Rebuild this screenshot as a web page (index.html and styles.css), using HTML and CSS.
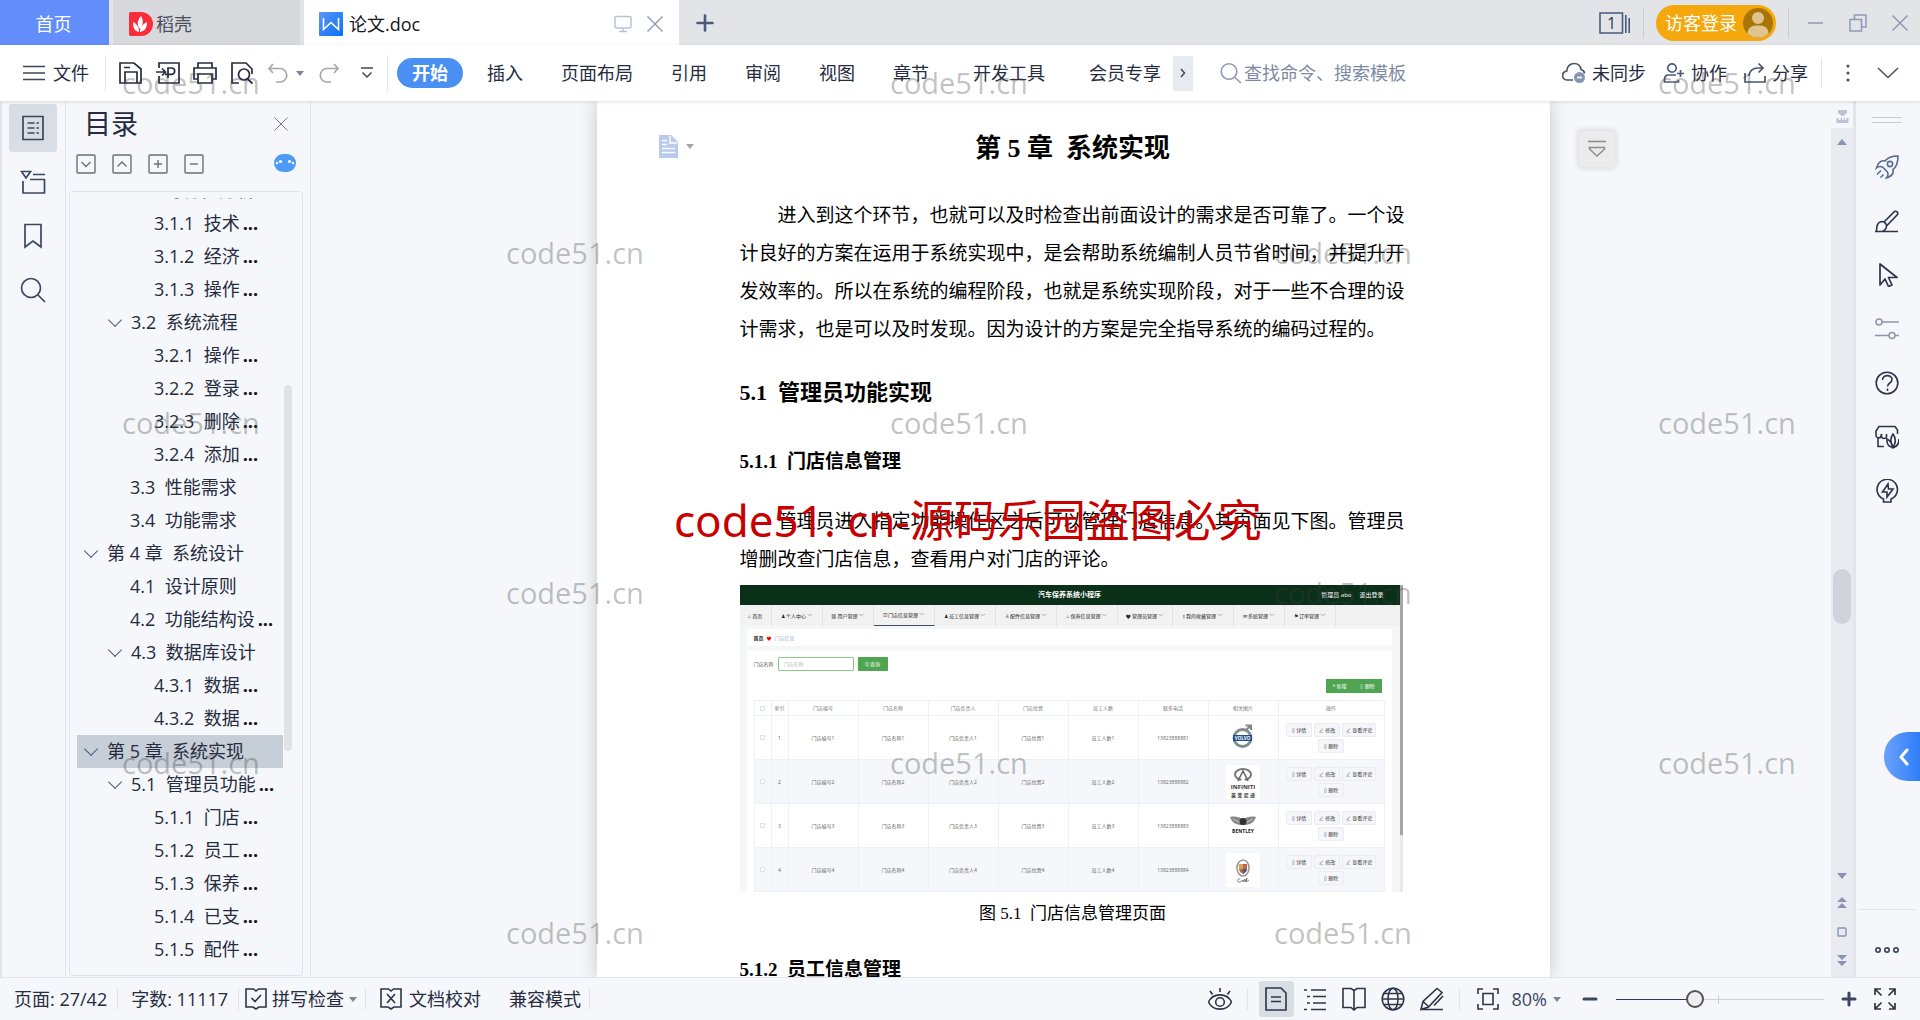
FILE: index.html
```html
<!DOCTYPE html>
<html lang="zh-CN">
<head>
<meta charset="utf-8">
<title>论文.doc</title>
<link rel="stylesheet" href="styles.css">
</head>
<body>
<header class="titlebar">
  <button class="tab tab-home">首页</button>
  <button class="tab tab-store">
    <svg width="24" height="24" viewBox="0 0 24 24"><path d="M0 2a2 2 0 0 1 2-2h10a12 12 0 0 1 0 24H2a2 2 0 0 1-2-2z" fill="#fb2b3a"/><path d="M12 4c3 5 2 9-1 13C7 12 9 8 12 4zM4 10c4 2 6 5 6 10-5-1-6-5-6-10zM18 10c0 6-2 9-7 10 0-5 3-8 7-10z" fill="#fff"/></svg>
    稻壳</button>
  <div class="tab tab-doc">
    <svg width="24" height="24" viewBox="0 0 24 24"><defs><linearGradient id="wps" x1="0" y1="0" x2="1" y2="1"><stop offset="0" stop-color="#5b95f7"/><stop offset="1" stop-color="#0b72f5"/></linearGradient></defs><rect width="24" height="24" rx="1" fill="url(#wps)"/><path d="M4.500 6v11.500l7.500-7 7.500 7V6" fill="none" stroke="#fff" stroke-width="1.600"/></svg>
    <span class="tab-name">论文.doc</span>
    <button class="plain" aria-label="显示方式"><svg width="18" height="18" viewBox="0 0 18 18" fill="none" stroke="#b9c2d6" stroke-width="1.500"><rect x="1" y="1.500" width="16" height="11.500" rx="1.500"/><path d="M9 13v3.500M5 16.500h8"/></svg></button>
    <button class="plain" aria-label="关闭标签"><svg width="18" height="18" viewBox="0 0 18 18" fill="none" stroke="#8d99b5" stroke-width="1.400"><path d="M1.500 1.500l15 15M16.500 1.500l-15 15"/></svg></button>
  </div>
  <button class="plain new-tab" aria-label="新建"><svg width="18" height="18" viewBox="0 0 18 18" stroke="#4b5a7c" stroke-width="2.600" stroke-linecap="round"><path d="M9 1.500v15M1.500 9h15"/></svg></button>
  <div class="window-tools">
    <button class="plain" aria-label="标签列表"><svg width="32" height="22" viewBox="0 0 32 22" fill="none" stroke="#4b5a7c" stroke-width="1.600"><path d="M1 1h22.500v20H1zM26.800 3v18M30.200 6v15"/><text x="12.500" y="17" text-anchor="middle" font-size="16" fill="#333a4c" stroke="none">1</text></svg></button>
    <span class="sep sep-title"></span>
    <button class="login">访客登录<svg width="30" height="30" viewBox="0 0 30 30"><circle cx="15" cy="15" r="15" fill="#a97504"/><circle cx="15" cy="10" r="6" fill="#dfc48f"/><path d="M4.500 25.500C5 19 9 17.500 15 17.500s10 1.500 10.500 8A15 15 0 0 1 4.500 25.500z" fill="#dfc48f"/></svg></button>
    <span class="sep sep-title"></span>
    <button class="plain win" aria-label="最小化"><svg width="18" height="18" viewBox="0 0 18 18" stroke="#8d99b5" stroke-width="1.500"><path d="M1 9h15"/></svg></button>
    <button class="plain win" aria-label="还原"><svg width="18" height="18" viewBox="0 0 18 18" fill="none" stroke="#8d99b5" stroke-width="1.500"><path d="M1 5.500h11.500v11.500H1zM5.500 5V1H17v12h-4"/></svg></button>
    <button class="plain win" aria-label="关闭"><svg width="18" height="18" viewBox="0 0 18 18" stroke="#8d99b5" stroke-width="1.500"><path d="M1.500 1.500l15 15M16.500 1.500l-15 15"/></svg></button>
  </div>
</header>

<nav class="toolbar">
  <button class="plain file"><svg width="22" height="16" viewBox="0 0 22 16" stroke="#3f4658" stroke-width="1.600"><path d="M0 1.500h22M0 8h22M0 14.500h22"/></svg>文件</button>
  <span class="sep"></span>
  <div class="quick">
    <button class="plain" aria-label="保存"><svg width="24" height="24" viewBox="0 0 24 24" fill="none" stroke="#262c3f" stroke-width="1.700"><path d="M1 2h14l7 6v14H1zM6 22V11h12v11M5 6.500h6"/></svg></button>
    <button class="plain" aria-label="输出为PDF"><svg width="24" height="24" viewBox="0 0 24 24" fill="none" stroke="#262c3f" stroke-width="1.700"><path d="M3 7V2h20v20H3v-7M0 11h9M6 7.500L9.500 11 6 14.500M12 17V7h3.500a3.200 3.200 0 0 1 0 6.400H9"/></svg></button>
    <button class="plain" aria-label="打印"><svg width="24" height="24" viewBox="0 0 24 24" fill="none" stroke="#262c3f" stroke-width="1.700"><path d="M5 7V2h14v5M5 18H1V7h22v11h-4M5 13h14v9H5z"/></svg></button>
    <button class="plain" aria-label="打印预览"><svg width="24" height="24" viewBox="0 0 24 24" fill="none" stroke="#262c3f" stroke-width="1.700"><path d="M9 22H2V2h14l6 6v5M17.500 18l5 4.500"/><circle cx="14" cy="13.500" r="5.500"/></svg></button>
    <button class="plain" aria-label="撤销"><svg width="22" height="22" viewBox="0 0 22 22" fill="none" stroke="#a3a7af" stroke-width="1.700"><path d="M6 2L2 6.500 6 11M2 6.500h11a6.500 6.500 0 0 1 0 13.500H9"/></svg></button>
    <i class="caret"></i>
    <button class="plain redo" aria-label="恢复"><svg width="22" height="22" viewBox="0 0 22 22" fill="none" stroke="#a3a7af" stroke-width="1.700"><path d="M16 2l4 4.500L16 11M20 6.500H9A6.500 6.500 0 0 0 9 20h4"/></svg></button>
    <button class="plain more" aria-label="更多"><svg width="12" height="12" viewBox="0 0 12 12" fill="none" stroke="#3f4658" stroke-width="1.500"><path d="M0 1h12M1.500 5.500L6 10l4.500-4.500"/></svg></button>
  </div>
  <span class="sep"></span>
  <div class="menus">
    <button class="pill">开始</button>
    <button class="plain">插入</button>
    <button class="plain">页面布局</button>
    <button class="plain">引用</button>
    <button class="plain">审阅</button>
    <button class="plain">视图</button>
    <button class="plain">章节</button>
    <button class="plain wide">开发工具</button>
    <button class="plain wide">会员专享</button>
  </div>
  <button class="scroll-menus" aria-label="更多菜单"><svg width="6" height="10" viewBox="0 0 6 10" fill="none" stroke="#3f4658" stroke-width="1.500"><path d="M1 1l3.500 4L1 9"/></svg></button>
  <label class="search"><svg width="22" height="22" viewBox="0 0 22 22" fill="none" stroke="#8d99b5" stroke-width="1.600"><circle cx="9" cy="9.500" r="7.800"/><path d="M15 15.500l6 5.500"/></svg><input type="text" placeholder="查找命令、搜索模板" aria-label="查找命令、搜索模板"></label>
  <div class="share">
    <button class="plain"><svg width="24" height="22" viewBox="0 0 24 22" fill="none" stroke="#4b5468" stroke-width="1.700"><path d="M11 18H5.500a4.500 4.500 0 0 1-.8-9C5 4 8.500 1.500 12 1.500c4 0 6.500 2.500 7 6 2 .5 3.500 2 3.500 4"/><circle cx="17.500" cy="15.500" r="5.500" fill="#8795b3" stroke="none"/><path d="M15 15.500h5" stroke="#fff"/></svg>未同步</button>
    <button class="plain"><svg width="22" height="22" viewBox="0 0 22 22" fill="none" stroke="#4b5a7c" stroke-width="1.700"><circle cx="9" cy="6" r="4.200"/><path d="M13 13H5.500C3 13 1.500 15 1.500 17.500V20h14v-2M17.500 8v7M14 11.500h7"/></svg>协作</button>
    <button class="plain"><svg width="22" height="22" viewBox="0 0 22 22" fill="none" stroke="#4b5468" stroke-width="1.700"><path d="M1 11v9h20v-6M5 14c0-5 4-8 9-8h5M14.500 1.500L19 6l-4.500 4.500"/></svg>分享</button>
    <span class="sep"></span>
    <button class="plain" aria-label="菜单"><svg width="4" height="20" viewBox="0 0 4 20" fill="#4b5468"><circle cx="2" cy="3" r="1.600"/><circle cx="2" cy="10" r="1.600"/><circle cx="2" cy="17" r="1.600"/></svg></button>
    <button class="plain fold" aria-label="收起"><svg width="22" height="12" viewBox="0 0 22 12" fill="none" stroke="#4b5468" stroke-width="1.600"><path d="M1 1l10 9.500L21 1"/></svg></button>
  </div>
</nav>

<main class="work">
  <aside class="rail">
    <button class="rail-btn on" aria-label="目录"><svg width="24" height="26" viewBox="0 0 24 26" fill="none" stroke="#3b4763" stroke-width="1.700"><path d="M2 1.500h20v23H2zM6.500 8h7M6.500 13h7M6.500 18h7M15.500 8H18M15.500 13H18M15.500 18H18"/></svg></button>
    <button class="rail-btn" aria-label="章节"><svg width="26" height="24" viewBox="0 0 26 24" fill="none" stroke="#3b4763" stroke-width="1.700"><path d="M1.500 1.500h9L6 8zM13 4.500h12M10 9.500h14.500V23H3V11"/></svg></button>
    <button class="rail-btn" aria-label="书签"><svg width="24" height="26" viewBox="0 0 24 26" fill="none" stroke="#3b4763" stroke-width="1.700"><path d="M4 1.500h16v22.500l-8-6-8 6z"/></svg></button>
    <button class="rail-btn" aria-label="查找"><svg width="26" height="26" viewBox="0 0 26 26" fill="none" stroke="#3b4763" stroke-width="1.700"><circle cx="11" cy="11" r="9.500"/><path d="M18 18l7 7"/></svg></button>
  </aside>

  <aside class="toc">
    <div class="toc-head"><h2>目录</h2><button class="plain" aria-label="关闭目录"><svg width="14" height="14" viewBox="0 0 14 14" stroke="#6d7890"><path d="M.5.5l13 13M13.500.5l-13 13"/></svg></button></div>
    <div class="toc-tools">
      <button class="plain" aria-label="展开"><svg width="20" height="20" viewBox="0 0 20 20" fill="none" stroke="#6d6f75" stroke-width="1.400"><rect x="1" y="1" width="18" height="18" rx="1"/><path d="M5.500 8l4.500 4.500L14.500 8"/></svg></button>
      <button class="plain" aria-label="收起"><svg width="20" height="20" viewBox="0 0 20 20" fill="none" stroke="#6d6f75" stroke-width="1.400"><rect x="1" y="1" width="18" height="18" rx="1"/><path d="M5.500 12.500L10 8l4.500 4.500"/></svg></button>
      <button class="plain" aria-label="增加级别"><svg width="20" height="20" viewBox="0 0 20 20" fill="none" stroke="#6d6f75" stroke-width="1.400"><rect x="1" y="1" width="18" height="18" rx="1"/><path d="M6 10h8M10 6v8"/></svg></button>
      <button class="plain" aria-label="减少级别"><svg width="20" height="20" viewBox="0 0 20 20" fill="none" stroke="#6d6f75" stroke-width="1.400"><rect x="1" y="1" width="18" height="18" rx="1"/><path d="M6 10h8"/></svg></button>
      <button class="plain robot" aria-label="智能识别目录"><svg width="22" height="18" viewBox="0 0 22 18"><rect width="22" height="18" rx="9" fill="#4e9bf5"/><g fill="#fff"><circle cx="3" cy="9" r="1.200"/><circle cx="6.500" cy="7.500" r="1.600"/><circle cx="15.500" cy="7.500" r="1.600"/><circle cx="19" cy="9" r="1.200"/></g></svg></button>
    </div>
    <div class="tree-box">
      <ul class="tree">
        <li class="l2">3.1&nbsp; 可行性分析</li>
        <li class="l3">3.1.1&nbsp; 技术<b>...</b></li>
        <li class="l3">3.1.2&nbsp; 经济<b>...</b></li>
        <li class="l3">3.1.3&nbsp; 操作<b>...</b></li>
        <li class="l2 open">3.2&nbsp; 系统流程</li>
        <li class="l3">3.2.1&nbsp; 操作<b>...</b></li>
        <li class="l3">3.2.2&nbsp; 登录<b>...</b></li>
        <li class="l3">3.2.3&nbsp; 删除<b>...</b></li>
        <li class="l3">3.2.4&nbsp; 添加<b>...</b></li>
        <li class="l2">3.3&nbsp; 性能需求</li>
        <li class="l2">3.4&nbsp; 功能需求</li>
        <li class="l1 open">第 4 章&nbsp; 系统设计</li>
        <li class="l2">4.1&nbsp; 设计原则</li>
        <li class="l2">4.2&nbsp; 功能结构设<b>...</b></li>
        <li class="l2 open">4.3&nbsp; 数据库设计</li>
        <li class="l3">4.3.1&nbsp; 数据<b>...</b></li>
        <li class="l3">4.3.2&nbsp; 数据<b>...</b></li>
        <li class="l1 open current">第 5 章&nbsp; 系统实现</li>
        <li class="l2 open">5.1&nbsp; 管理员功能<b>...</b></li>
        <li class="l3">5.1.1&nbsp; 门店<b>...</b></li>
        <li class="l3">5.1.2&nbsp; 员工<b>...</b></li>
        <li class="l3">5.1.3&nbsp; 保养<b>...</b></li>
        <li class="l3">5.1.4&nbsp; 已支<b>...</b></li>
        <li class="l3">5.1.5&nbsp; 配件<b>...</b></li>
      </ul>
      <div class="tree-thumb"></div>
    </div>
  </aside>

  <section class="desk">
    <div class="gutter"></div>
    <article class="paper">
      <div class="paste"><svg width="19" height="23" viewBox="0 0 19 23"><path d="M0 0h12l7 7v16H0z" fill="#b9cbea"/><path d="M11 1v7h7M3 5.500h5M3 9.500h5M3 13.500h13M3 17.500h13" fill="none" stroke="#fff" stroke-width="1.400"/></svg><i class="caret grey"></i></div>
      <div class="text">
        <h1>第 5 章&nbsp; 系统实现</h1>
        <p class="p1">进入到这个环节，也就可以及时检查出前面设计的需求是否可靠了。一个设计良好的方案在运用于系统实现中，是会帮助系统编制人员节省时间，并提升开发效率的。所以在系统的编程阶段，也就是系统实现阶段，对于一些不合理的设计需求，也是可以及时发现。因为设计的方案是完全指导系统的编码过程的。</p>
        <h2>5.1&nbsp; 管理员功能实现</h2>
        <h3 class="first">5.1.1&nbsp; 门店信息管理</h3>
        <p class="p2">管理员进入指定功能操作区之后可以管理门店信息。其页面见下图。管理员增删改查门店信息，查看用户对门店的评论。</p>
        <figure>
          <div class="shot">
            <div class="shot-main">
              <div class="shot-head"><span></span><b>汽车保养系统小程序</b><span class="who"><span>管理员 abo</span><span>退出登录</span></span></div>
              <div class="shot-nav">
                <span class="n0">⌂ 首页</span><span class="n1">♟ 个人中心 ﹀</span><span class="n1">▦ 用户管理 ﹀</span><span class="n2 sel">☑ 门店信息管理 ﹀</span><span class="n2">♟ 员工信息管理 ﹀</span><span class="n2">♙ 配件信息管理 ﹀</span><span class="n2">⌂ 保养信息管理 ﹀</span><span class="n3">♥ 管理员管理 ﹀</span><span class="n2">⫾ 我的收藏管理 ﹀</span><span class="n1">✉ 系统管理 ﹀</span><span class="n1">⚑ 订单管理 ﹀</span>
              </div>
              <div class="crumb"><b>首页</b><i>♥</i><span>门店信息</span></div>
              <div class="panel">
                <div class="query"><label for="shop">门店名称</label><input id="shop" type="text" placeholder="门店名称"><button>Q 查询</button></div>
                <div class="ops"><button>+ 新增</button><button>▯ 删除</button></div>
                <table>
                  <colgroup><col class="c1"><col class="c1"><col class="c2"><col class="c2"><col class="c2"><col class="c2"><col class="c2"><col class="c2"><col class="c2"><col class="c3"></colgroup>
                  <thead><tr><th><input type="checkbox" aria-label="全选"></th><th>索引</th><th>门店编号</th><th>门店名称</th><th>门店负责人</th><th>门店位置</th><th>员工人数</th><th>联系电话</th><th>相关图片</th><th>操作</th></tr></thead>
                  <tbody>
                    <tr><td><input type="checkbox" aria-label="选择1"></td><td>1</td><td>门店编号1</td><td>门店名称1</td><td>门店负责人1</td><td>门店位置1</td><td>员工人数1</td><td>13823888881</td>
                      <td><svg width="34" height="34" viewBox="0 0 34 34"><rect width="34" height="34" fill="#fff"/><circle cx="16.500" cy="17" r="8.500" fill="none" stroke="#7d8b91" stroke-width="2.800"/><path d="M20 9l5-4.500M19.500 4.500H25V9" fill="none" stroke="#7d8b91" stroke-width="2.200"/><rect x="7" y="14" width="19" height="6" fill="#1d4f8f"/><text x="16.500" y="18.700" font-size="4.500" font-weight="700" fill="#fff" text-anchor="middle">VOLVO</text></svg></td>
                      <td class="acts"><button>▯ 详情</button><button>∠ 修改</button><button>∠ 查看评论</button><button>▯ 删除</button></td></tr>
                    <tr><td><input type="checkbox" aria-label="选择2"></td><td>2</td><td>门店编号2</td><td>门店名称2</td><td>门店负责人2</td><td>门店位置2</td><td>员工人数2</td><td>13823888882</td>
                      <td><svg width="34" height="34" viewBox="0 0 34 34"><rect width="34" height="34" fill="#fff"/><ellipse cx="17" cy="9.500" rx="8" ry="5.500" fill="none" stroke="#777" stroke-width="2"/><path d="M12 16l5-10 5 10" fill="none" stroke="#666" stroke-width="1.600"/><path d="M15 16l2-7 2 7z" fill="#fff"/><text x="17" y="24" font-size="6" font-weight="700" fill="#333" text-anchor="middle">INFINITI</text><text x="17" y="32" font-size="5" font-weight="700" fill="#333" text-anchor="middle">英 菲 尼 迪</text></svg></td>
                      <td class="acts"><button>▯ 详情</button><button>∠ 修改</button><button>∠ 查看评论</button><button>▯ 删除</button></td></tr>
                    <tr><td><input type="checkbox" aria-label="选择3"></td><td>3</td><td>门店编号3</td><td>门店名称3</td><td>门店负责人3</td><td>门店位置3</td><td>员工人数3</td><td>13823888883</td>
                      <td><svg width="34" height="34" viewBox="0 0 34 34"><rect width="34" height="34" fill="#fff"/><path d="M4 8c5-1 9 0 13 2 4-2 8-3 13-2-2 6-6 8-13 8S6 14 4 8z" fill="#888"/><path d="M7 10l8 4M27 10l-8 4" stroke="#ddd" stroke-width=".7"/><circle cx="17" cy="12.500" r="3.500" fill="#333"/><text x="17" y="24" font-size="5" font-weight="700" fill="#222" text-anchor="middle">BENTLEY</text></svg></td>
                      <td class="acts"><button>▯ 详情</button><button>∠ 修改</button><button>∠ 查看评论</button><button>▯ 删除</button></td></tr>
                    <tr><td><input type="checkbox" aria-label="选择4"></td><td>4</td><td>门店编号4</td><td>门店名称4</td><td>门店负责人4</td><td>门店位置4</td><td>员工人数4</td><td>13823888884</td>
                      <td><svg width="34" height="34" viewBox="0 0 34 34"><rect width="34" height="34" fill="#fff"/><ellipse cx="17" cy="15" rx="6" ry="8" fill="none" stroke="#999" stroke-width="1.600"/><path d="M13 11h8v5c0 2-2 4-4 5-2-1-4-3-4-5z" fill="#b9664d"/><path d="M13 11h4v5h-4z" fill="#d8a34a"/><path d="M17 16h4c0 2-2 4-4 5z" fill="#4b5a86"/><path d="M14 26c-3-1-4 4 0 3l3-2v2l2-3v3l2-4-1 4 3-2" fill="none" stroke="#555" stroke-width=".7"/></svg></td>
                      <td class="acts"><button>▯ 详情</button><button>∠ 修改</button><button>∠ 查看评论</button><button>▯ 删除</button></td></tr>
                  </tbody>
                </table>
              </div>
            </div>
            <div class="shot-bar"><div></div></div>
          </div>
          <figcaption>图 5.1&nbsp; 门店信息管理页面</figcaption>
        </figure>
        <h3 class="next">5.1.2&nbsp; 员工信息管理</h3>
      </div>
    </article>
    <div class="gutter"><button class="float-btn" aria-label="折叠"><svg width="18" height="18" viewBox="0 0 18 18" fill="none" stroke="#8b8b8b" stroke-width="1.500"><path d="M0 1.500h18M1.500 7.500h15v1.500L9 16 1.500 9z"/></svg></button></div>
  </section>

  <div class="vbar">
    <svg class="ruler" width="13" height="13" viewBox="0 0 13 13" fill="#b9c2d8"><path d="M2 0h9v3L6.500 6.500 2 3zM.5 8h2v2h2V8h1.500v2h1.500V8H9v2h1.500V8h2v5H.5z"/></svg>
    <div class="track">
      <button class="plain" aria-label="向上滚动"><svg width="10" height="6" viewBox="0 0 10 6" fill="#8795b3"><path d="M5 0l5 6H0z"/></svg></button>
      <div class="thumb"></div>
      <button class="plain" aria-label="向下滚动"><svg width="10" height="6" viewBox="0 0 10 6" fill="#8795b3"><path d="M0 0h10L5 6z"/></svg></button>
      <button class="plain" aria-label="上一页"><svg width="10" height="12" viewBox="0 0 10 12" fill="#8795b3"><path d="M5 0l5 5H0zM5 6l5 5H0z"/></svg></button>
      <button class="plain" aria-label="选择浏览对象"><svg width="10" height="10" viewBox="0 0 10 10" fill="none" stroke="#8795b3" stroke-width="1.400"><rect x="1" y="1" width="8" height="8" rx="1"/></svg></button>
      <button class="plain" aria-label="下一页"><svg width="10" height="12" viewBox="0 0 10 12" fill="#8795b3"><path d="M0 0h10L5 5zM0 6h10l-5 5z"/></svg></button>
    </div>
  </div>

  <aside class="tools">
    <div class="grip"></div>
    <button class="plain" aria-label="火箭"><svg width="24" height="24" viewBox="0 0 24 24" fill="none" stroke="#5a6a94" stroke-width="1.600"><path d="M23 1c-6 0-10 1-13 5-4-1-7 2-8.500 7C4 11 6 11 8 12.500l4 4c1.500 2 1.500 4-.5 6.500C16 21.500 19 19 18 14.500c4-3 5-7.500 5-13.500zM2 19.500l4-4M5.500 22.500l3-3"/><circle cx="15" cy="9" r="2.600"/></svg></button>
    <button class="plain" aria-label="样式"><svg width="24" height="24" viewBox="0 0 24 24" fill="none" stroke="#2c3448" stroke-width="1.600"><path d="M9 13L19.500 2.500c2-1 4 1 3 3L12 16.500M0 22.500h23M1.500 22c0-6 1-9 5-9.500 4 0 6.500 4 4 7.500-1 1.500-2 2-3 2.500"/></svg></button>
    <button class="plain" aria-label="选择"><svg width="24" height="24" viewBox="0 0 24 24" fill="none" stroke="#2c3448" stroke-width="1.700" stroke-linejoin="round"><path d="M5 1v21l5-6 3.500 7.500 3.500-1.500-3.500-7.500H22z"/></svg></button>
    <button class="plain" aria-label="设置"><svg width="24" height="24" viewBox="0 0 24 24" fill="none" stroke="#8d97ab" stroke-width="1.500"><circle cx="4" cy="5" r="3"/><path d="M7 5h17M0 18.500h14M20 18.500h4"/><circle cx="17" cy="18.500" r="3"/></svg></button>
    <button class="plain" aria-label="帮助"><svg width="24" height="24" viewBox="0 0 24 24" fill="none" stroke="#2c3448" stroke-width="1.600"><circle cx="12" cy="12" r="10.800"/><path d="M7.500 9c0-6 9.500-5.500 9.500-.5 0 3.500-4.500 3.500-4.500 7M12.500 17.500v2.500"/></svg></button>
    <button class="plain" aria-label="素材"><svg width="24" height="24" viewBox="0 0 24 24" fill="none" stroke="#2c3448" stroke-width="1.600"><path d="M22.500 9V5L20 1.500H4L1 6v5c1 2 3 2.500 5 1 0-2 .5-3 .5-3v3c1 2 4 2 5 0V9M3 13v8.500h6M18 9c-3 4-3 8 0 13.500 3-5 3-9.500 0-13.500zM12 14c-.5 4.500 1 7.500 6 8.500-1-4.500-3-7-6-8.500zM24 14c0 4.500-1.500 7.500-6 8.500 1-2 2-4 2.500-6"/></svg></button>
    <button class="plain" aria-label="技巧"><svg width="24" height="24" viewBox="0 0 24 24" fill="none" stroke="#2c3448" stroke-width="1.600"><path d="M8.500 23v-3A10.200 10.200 0 1 1 16 20v3zM13 5l-5.500 8H12v5l6-8h-4.500z"/></svg></button>
    <div class="fill"></div>
    <button class="slide" aria-label="展开侧栏"><svg width="10" height="18" viewBox="0 0 10 18" fill="none" stroke="#fff" stroke-width="3" stroke-linecap="round" stroke-linejoin="round"><path d="M8 2L2 9l6 7"/></svg></button>
    <div class="tools-end"><button class="plain" aria-label="更多"><svg width="24" height="8" viewBox="0 0 24 8" fill="none" stroke="#3b4763" stroke-width="1.700"><circle cx="3" cy="4" r="2.200"/><circle cx="12" cy="4" r="2.200"/><circle cx="21" cy="4" r="2.200"/></svg></button></div>
  </aside>
</main>

<footer class="status">
  <span class="s-item">页面: 27/42</span><span class="sep"></span>
  <span class="s-item">字数: 11117</span><span class="sep"></span>
  <button class="plain s-btn"><svg width="22" height="22" viewBox="0 0 22 22" fill="none" stroke="#2c3448" stroke-width="1.600"><path d="M1 1h7.500L11 3l2.500-2H21v18h-7l-3 2-3-2H1zM6.500 10l3.500 3.500L16 7"/></svg>拼写检查<i class="caret"></i></button><span class="sep"></span>
  <button class="plain s-btn doc-check"><svg width="22" height="22" viewBox="0 0 22 22" fill="none" stroke="#2c3448" stroke-width="1.600"><path d="M1 1h7.500L11 3l2.500-2H21v18h-7l-3 2-3-2H1zM7 6l8 9M15 6l-8 9"/></svg>文档校对</button>
  <span class="mode">兼容模式</span><span class="sep"></span>
  <div class="views">
    <button class="plain" aria-label="护眼模式"><svg width="24" height="24" viewBox="0 0 24 24" fill="none" stroke="#2c3448" stroke-width="1.600"><path d="M0.500 15C5 5.500 19 5.500 23.500 15 19 24.500 5 24.500.5 15zM12 1v4M2 4l2.500 3.500M22 4l-2.500 3.500"/><circle cx="12" cy="15" r="4.300"/></svg></button>
    <span class="sep"></span>
    <button class="view-on" aria-label="页面视图"><svg width="24" height="24" viewBox="0 0 24 24" fill="none" stroke="#2c3448" stroke-width="1.600"><path d="M2 1h15l5 5v17H2zM7 10h10M7 14.500h10"/></svg></button>
    <button class="plain" aria-label="大纲"><svg width="24" height="24" viewBox="0 0 24 24" fill="none" stroke="#2c3448" stroke-width="1.600"><path d="M1 3h3M8 3h15M4 9.500h3M10 9.500h13M4 16h3M10 16h13M1 22.500h3M8 22.500h15"/></svg></button>
    <button class="plain" aria-label="阅读"><svg width="24" height="24" viewBox="0 0 24 24" fill="none" stroke="#2c3448" stroke-width="1.600"><path d="M1 1.500h8l3 2 3-2h8v19h-8l-3 2.500-3-2.500H1zM12 3.500V22"/></svg></button>
    <button class="plain" aria-label="网页"><svg width="24" height="24" viewBox="0 0 24 24" fill="none" stroke="#2c3448" stroke-width="1.500"><circle cx="12" cy="12" r="10.800"/><ellipse cx="12" cy="12" rx="5" ry="10.800"/><path d="M1.200 12h21.600M3 6.500h18M3 17.500h18"/></svg></button>
    <button class="plain" aria-label="写作"><svg width="24" height="24" viewBox="0 0 24 24" fill="none" stroke="#2c3448" stroke-width="1.600"><path d="M1 22.500l2-8L17 1.500l5 4L8.500 20zM3 14.500l5.500 5M1 22.500h22M14 18.500L23 9"/></svg></button>
    <span class="sep"></span>
    <button class="plain fit" aria-label="适应页面"><svg width="22" height="22" viewBox="0 0 22 22" fill="none" stroke="#2c3448" stroke-width="1.600"><path d="M6 1H1v5M16 1h5v5M6 21H1v-5M16 21h5v-5M6 5.500h10v11H6z"/></svg></button>
    <button class="plain pct">80%<i class="caret"></i></button>
    <button class="plain minus" aria-label="缩小"><svg width="16" height="16" viewBox="0 0 16 16" stroke="#3b4763" stroke-width="3" stroke-linecap="round"><path d="M2 8h12"/></svg></button>
    <input class="zoom" type="range" min="0" max="100" value="37" aria-label="缩放">
    <button class="plain plus" aria-label="放大"><svg width="16" height="16" viewBox="0 0 16 16" stroke="#3b4763" stroke-width="3" stroke-linecap="round"><path d="M2 8h12M8 2v12"/></svg></button>
    <button class="plain" aria-label="全屏"><svg width="22" height="22" viewBox="0 0 22 22" fill="none" stroke="#2c3448" stroke-width="1.700"><path d="M1 7V1h6M1 1l6.500 6.500M15 1h6v6M21 1l-6.500 6.500M1 15v6h6M1 21l6.500-6.500M21 15v6h-6M21 21l-6.500-6.500"/></svg></button>
  </div>
</footer>

<div class="marks" aria-hidden="true">
  <div class="mark-row"><span>code51.cn</span><span>code51.cn</span><span>code51.cn</span></div>
  <div class="mark-row odd"><span>code51.cn</span><span>code51.cn</span></div>
  <div class="mark-row"><span>code51.cn</span><span>code51.cn</span><span>code51.cn</span></div>
  <div class="mark-row odd"><span>code51.cn</span><span>code51.cn</span></div>
  <div class="mark-row"><span>code51.cn</span><span>code51.cn</span><span>code51.cn</span></div>
  <div class="mark-row odd"><span>code51.cn</span><span>code51.cn</span></div>
</div>
<div class="notice">code51. cn-源码乐园盗图必究</div>
</body>
</html>
```
FILE: styles.css
```css
* { box-sizing: border-box; }
html, body { height: 100%; }
body {
  margin: 0;
  display: flex;
  flex-direction: column;
  overflow: hidden;
  position: relative;
  background: #f5f7fa;
  color: #262c3f;
  font: 18px/24px "Open Sans", "Noto Sans CJK SC", sans-serif;
}
button, input { font: inherit; color: inherit; margin: 0; }
button { border: 0; padding: 0; background: none; display: inline-flex; align-items: center; white-space: nowrap; }
svg { display: block; flex: none; }
h1, h2, h3, p, ul, figure { margin: 0; padding: 0; }
.sep { width: 1px; height: 36px; background: #e1e4ea; flex: none; }
.caret { width: 0; height: 0; border: 4px solid transparent; border-top: 5px solid #7b879f; border-bottom: 0; flex: none; }
.caret.grey { border-top-color: #a6a6a6; }

/* title bar */
.titlebar { display: flex; height: 45px; flex: none; background: #e2e4e8; }
.tab { display: flex; align-items: center; padding-top: 2px; }
.tab-home { width: 109px; justify-content: center; padding-right: 2px; background: #628dfb; color: #fff; margin-right: 4px; }
.tab-store { width: 187px; padding-left: 16px; gap: 3px; background: #d8d9dd; color: #4b4f5b; margin-right: 4px; }
.tab-doc { width: 375px; padding: 2px 15px 0; background: #fff; color: #14161c; gap: 14px; }
.tab-name { flex: 1; margin-left: -8px; }
.new-tab { margin-left: 17px; }
.window-tools { margin-left: auto; display: flex; align-items: center; padding-right: 11px; }
.window-tools svg text { font-family: "Open Sans", sans-serif; }
.sep-title { height: 30px; background: #c9ccd3; margin: 0 12px; }
.login { height: 36px; border-radius: 18px; background: #f5a80c; color: #fff; padding: 0 3px 0 9px; gap: 6px; }
.win { margin-left: 24px; }
.sep-title + .win { margin-left: 6px; }

/* toolbar */
.toolbar { display: flex; align-items: center; height: 56px; flex: none; background: #fff; padding: 0 21px 0 23px; box-shadow: 0 1px 4px rgba(0, 0, 0, .12); position: relative; }
.file { gap: 8px; margin-right: 16px; }
.quick { display: flex; align-items: center; padding: 0 14px 0 13px; }
.quick .plain { margin-right: 13px; }
.quick .caret { margin-left: -6px; margin-right: 14px; }
.quick .redo { margin-right: 21px; }
.quick .more { margin-right: 0; }
.menus { display: flex; align-items: center; gap: 38px; padding-left: 9px; }
.pill { height: 30px; padding: 0 15px; border-radius: 15px; background: #4a90f2; color: #fff; font-weight: 700; margin-right: -14px; }
.menus .wide { margin-left: 6px; }
.scroll-menus { width: 20px; height: 35px; margin-left: 12px; justify-content: center; background: #e7eaef; }
.search { display: flex; align-items: center; margin-left: 27px; gap: 2px; flex: 0 1 220px; }
.search input { border: 0; padding: 0; background: none; min-width: 0; flex: 1; }
.search input::placeholder { color: #7e8aa5; opacity: 1; }
.share { display: flex; align-items: center; margin-left: auto; }
.share .plain { gap: 6px; margin-right: 17px; }
.share .sep { margin: 0 24px 0 -4px; height: 30px; }
.share .plain[aria-label] { margin-right: 27px; }
.share .fold[aria-label] { margin-right: 0; }

/* workspace */
.work { flex: 1; min-height: 0; display: flex; }
.rail { width: 66px; flex: none; display: flex; flex-direction: column; align-items: center; gap: 6px; padding: 3px 2px 0 0; border-left: 2px solid #e1e4ea; border-right: 1px solid #e1e4ea; }
.rail-btn { width: 48px; height: 48px; justify-content: center; border-radius: 3px; }
.rail-btn.on { background: #d9dde4; }
.toc { width: 245px; flex: none; display: flex; flex-direction: column; border-right: 1px solid #e1e4ea; }
.toc-head { display: flex; align-items: center; justify-content: space-between; height: 46px; padding: 0 22px 0 18px; }
.toc-head h2 { font-size: 27px; line-height: 36px; font-weight: 400; }
.toc-tools { display: flex; gap: 16px; padding: 7px 14px 0 10px; height: 44px; align-items: flex-start; }
.robot { margin-left: auto; }
.tree-box { flex: 1; min-height: 0; display: flex; margin: 0 7px 1px 3px; border: 1px solid #e1e4ea; border-radius: 3px; padding: 6px 10px 0 7px; overflow: hidden; gap: 1px; }
.tree { list-style: none; flex: 1; overflow: hidden; white-space: nowrap; }
.tree li { height: 33px; line-height: 33px; display: flex; align-items: center; }
.tree li:first-child { margin-top: -24px; }
.tree b { color: #14161c; line-height: 33px; margin-left: 3px; }
.l1 { padding-left: 29px; }
.l2 { padding-left: 53px; }
.l3 { padding-left: 77px; }
.tree .open::before { content: ""; width: 9px; height: 9px; margin: -6px 11px 0 -20px; border: solid #4b5a7c; border-width: 0 1px 1px 0; transform: rotate(45deg); flex: none; }
.current { background: #c6ced7; }
.tree-thumb { width: 8px; height: 366px; margin-top: 187px; border-radius: 4px; background: #dfe3e6; flex: none; }

/* document */
.desk { flex: 1; min-width: 0; display: flex; overflow: hidden; padding-left: 4px; }
.gutter { flex: 1; padding: 30px 0 0 29px; }
.float-btn { width: 36px; height: 36px; justify-content: center; background: #ebebeb; border-radius: 3px; box-shadow: 0 0 5px 2px rgba(0, 0, 0, .1); }
.paper { display: grid; grid-template-columns: 143px 666px 144px; align-content: start; background: #fff; box-shadow: 0 0 18px rgba(0, 0, 0, .2); }
.paste { display: flex; align-items: center; align-self: start; gap: 8px; padding: 34px 0 0 62px; }
.text { font-family: "Liberation Serif", "Noto Sans CJK SC", serif; font-size: 19px; line-height: 38px; color: #000; padding-top: 29px; text-spacing-trim: space-all; }
.text h1 { font-size: 26px; text-align: center; }
.text h2 { font-size: 22px; margin-top: 25px; }
.text h3 { font-size: 19px; }
.p1, .p2 { text-indent: 38px; }
.p1 { margin-top: 29px; }
.first { margin-top: 31px; }
.p2 { margin-top: 22px; }
.next { margin-top: 18px; }
figure { margin-top: 6px; }
figcaption { font-size: 17px; text-align: center; margin-top: 3px; }

/* figure: shop admin page */
.shot { display: flex; width: 663px; height: 307px; overflow: hidden; font: 5px/8px "Open Sans", "Noto Sans CJK SC", sans-serif; color: #555; background: #f4f6f8; }
.shot-main { flex: 1; min-width: 0; }
.shot-head { height: 20px; display: grid; grid-template-columns: 1fr auto 1fr; align-items: center; background: #0b3019; color: #fff; }
.shot-head b { font-size: 7px; }
.who { display: flex; justify-content: flex-end; gap: 8px; font-size: 6px; padding-right: 16px; }
.shot-nav { height: 21px; display: flex; background: #f2f2f2; color: #222; white-space: nowrap; }
.shot-nav span { display: flex; align-items: center; justify-content: center; border-right: 1px solid #e2e2e2; }
.shot-nav .sel { border-bottom: 1px solid #444b5c; }
.n0 { width: 32px; }
.n1 { width: 51px; }
.n2 { width: 61px; }
.n3 { width: 55px; }
.crumb { height: 17px; margin: 3px 8px 4px 7px; padding-left: 7px; display: flex; align-items: center; gap: 3px; background: #fff; color: #222; }
.crumb i { color: #f00; font-style: normal; }
.crumb span { color: #a3b2c8; }
.panel { background: #fff; margin: 0 8px 0 7px; padding: 7px 7px 0; }
.query { display: flex; align-items: center; gap: 4px; height: 14px; }
.query input { width: 76px; height: 14px; border: 1px solid #8cc98c; padding: 0 5px; border-radius: 1px; }
.query input::placeholder { color: #b5b9c2; }
.shot button { justify-content: center; }
.query button { width: 30px; height: 14px; background: #4fa551; color: #fff; border-radius: 1px; }
.ops { display: flex; justify-content: flex-end; margin: 8px 3px 7px 0; }
.ops button { width: 28px; height: 14px; background: #4fa551; color: #fff; }
.shot table { width: 631px; table-layout: fixed; border-collapse: collapse; color: #666; text-align: center; }
.c1 { width: 17px; }
.c2 { width: 70px; }
.shot th, .shot td { border: 1px solid #edf0f4; padding: 0; font-weight: 400; }
.shot th { height: 15px; color: #777; }
.shot td { height: 44px; }
.shot td svg { margin: 0 auto; }
.shot tbody tr:nth-child(even) { background: #f5f7fa; }
.shot input[type="checkbox"] { appearance: none; width: 5px; height: 5px; border: 1px solid #dde0e6; border-radius: 1px; background: #fff; display: block; margin: 0 auto; }
.acts button { height: 14px; width: 26px; margin: 1px; border: 1px solid #ececf0; border-radius: 2px; background: #f5f6fa; color: #333; vertical-align: middle; }
.acts button:nth-child(3) { width: 34px; }
.shot-bar { width: 3px; background: #e9e9e9; }
.shot-bar div { height: 250px; background: #a3a5a7; }

/* vertical scroll bar */
.vbar { width: 25px; flex: none; display: flex; flex-direction: column; border-right: 3px solid #e3e5ec; }
.ruler { margin: 9px 5px 5px; }
.track { flex: 1; background: #e9ebf0; display: flex; flex-direction: column; align-items: center; padding: 11px 0 10px; }
.thumb { width: 18px; height: 55px; border-radius: 9px; background: #cfd3dc; margin: 424px 0 auto; }
.track .plain { margin-top: 18px; }
.track .plain:first-child { margin-top: 0; }

/* right tool rail */
.tools { width: 64px; flex: none; display: flex; flex-direction: column; align-items: center; gap: 30px; position: relative; padding-right: 2px; }
.grip { width: 30px; height: 6px; border: solid #c9ccd1; border-width: 1px 0; margin: 16px 0 2px; flex: none; }
.fill { flex: 1; }
.slide { width: 36px; height: 49px; border-radius: 24px 0 0 24px; justify-content: center; padding-left: 4px; background: linear-gradient(90deg, #6ba3fb, #2f7cf8); position: absolute; right: 0; top: 631px; }
.tools-end { width: 58px; height: 68px; border-top: 1px solid #e1e4ea; display: flex; justify-content: center; }
.tools-end .plain { height: 80px; }

/* status bar */
.status { height: 43px; flex: none; display: flex; align-items: center; border-top: 1px solid #e1e4ea; background: #f5f7fa; padding: 0 24px 0 14px; }
.status .sep { height: 22px; }
.s-item { margin-right: 10px; }
.sep + .s-item { margin-left: 13px; }
.s-btn { gap: 5px; margin: 0 8px 0 6px; }
.doc-check { margin: 0 28px 0 14px; gap: 7px; }
.mode { margin-right: 8px; }
.views { margin-left: auto; display: flex; align-items: center; }
.views > .plain { margin-right: 15px; }
.views > .plain:last-child { margin-right: 0; }
.views .sep { margin: 0 11px 0 0; }
.views .view-on { width: 35px; height: 36px; justify-content: center; background: #d9dde4; border-radius: 3px; margin-right: 9px; }
.views .fit { margin: 0 13px 0 6px; }
.pct { gap: 6px; color: #3b4763; }
.views > .pct { margin-right: 21px; }
.views > .minus { margin-right: 18px; }
.zoom { appearance: none; width: 208px; height: 20px; background: linear-gradient(#333f4f, #333f4f) left center / 78px 1px no-repeat, linear-gradient(#c9ccd3, #c9ccd3) 102px center / 1px 9px no-repeat, linear-gradient(#d0d2d6, #d0d2d6) center / 100% 1px no-repeat; margin-right: 17px; }
.zoom::-webkit-slider-thumb { appearance: none; width: 18px; height: 18px; border-radius: 9px; border: 2px solid #555; background: #eee; }
.views > .plus { margin-right: 17px; }

/* watermark layer */
.marks { position: absolute; inset: 63px 0 0 0; overflow: hidden; pointer-events: none; color: rgba(60, 60, 60, .32); font-size: 29px; line-height: 40px; }
.mark-row { height: 170px; display: grid; grid-template-columns: 40vw 40vw 20vw; margin-left: 122px; }
.mark-row.odd { margin-left: 506px; }
.notice { position: absolute; left: 674px; top: 490px; font-size: 44px; line-height: 60px; color: #c80000; font-family: "Noto Sans", "Noto Sans CJK SC", sans-serif; white-space: nowrap; pointer-events: none; }
```
